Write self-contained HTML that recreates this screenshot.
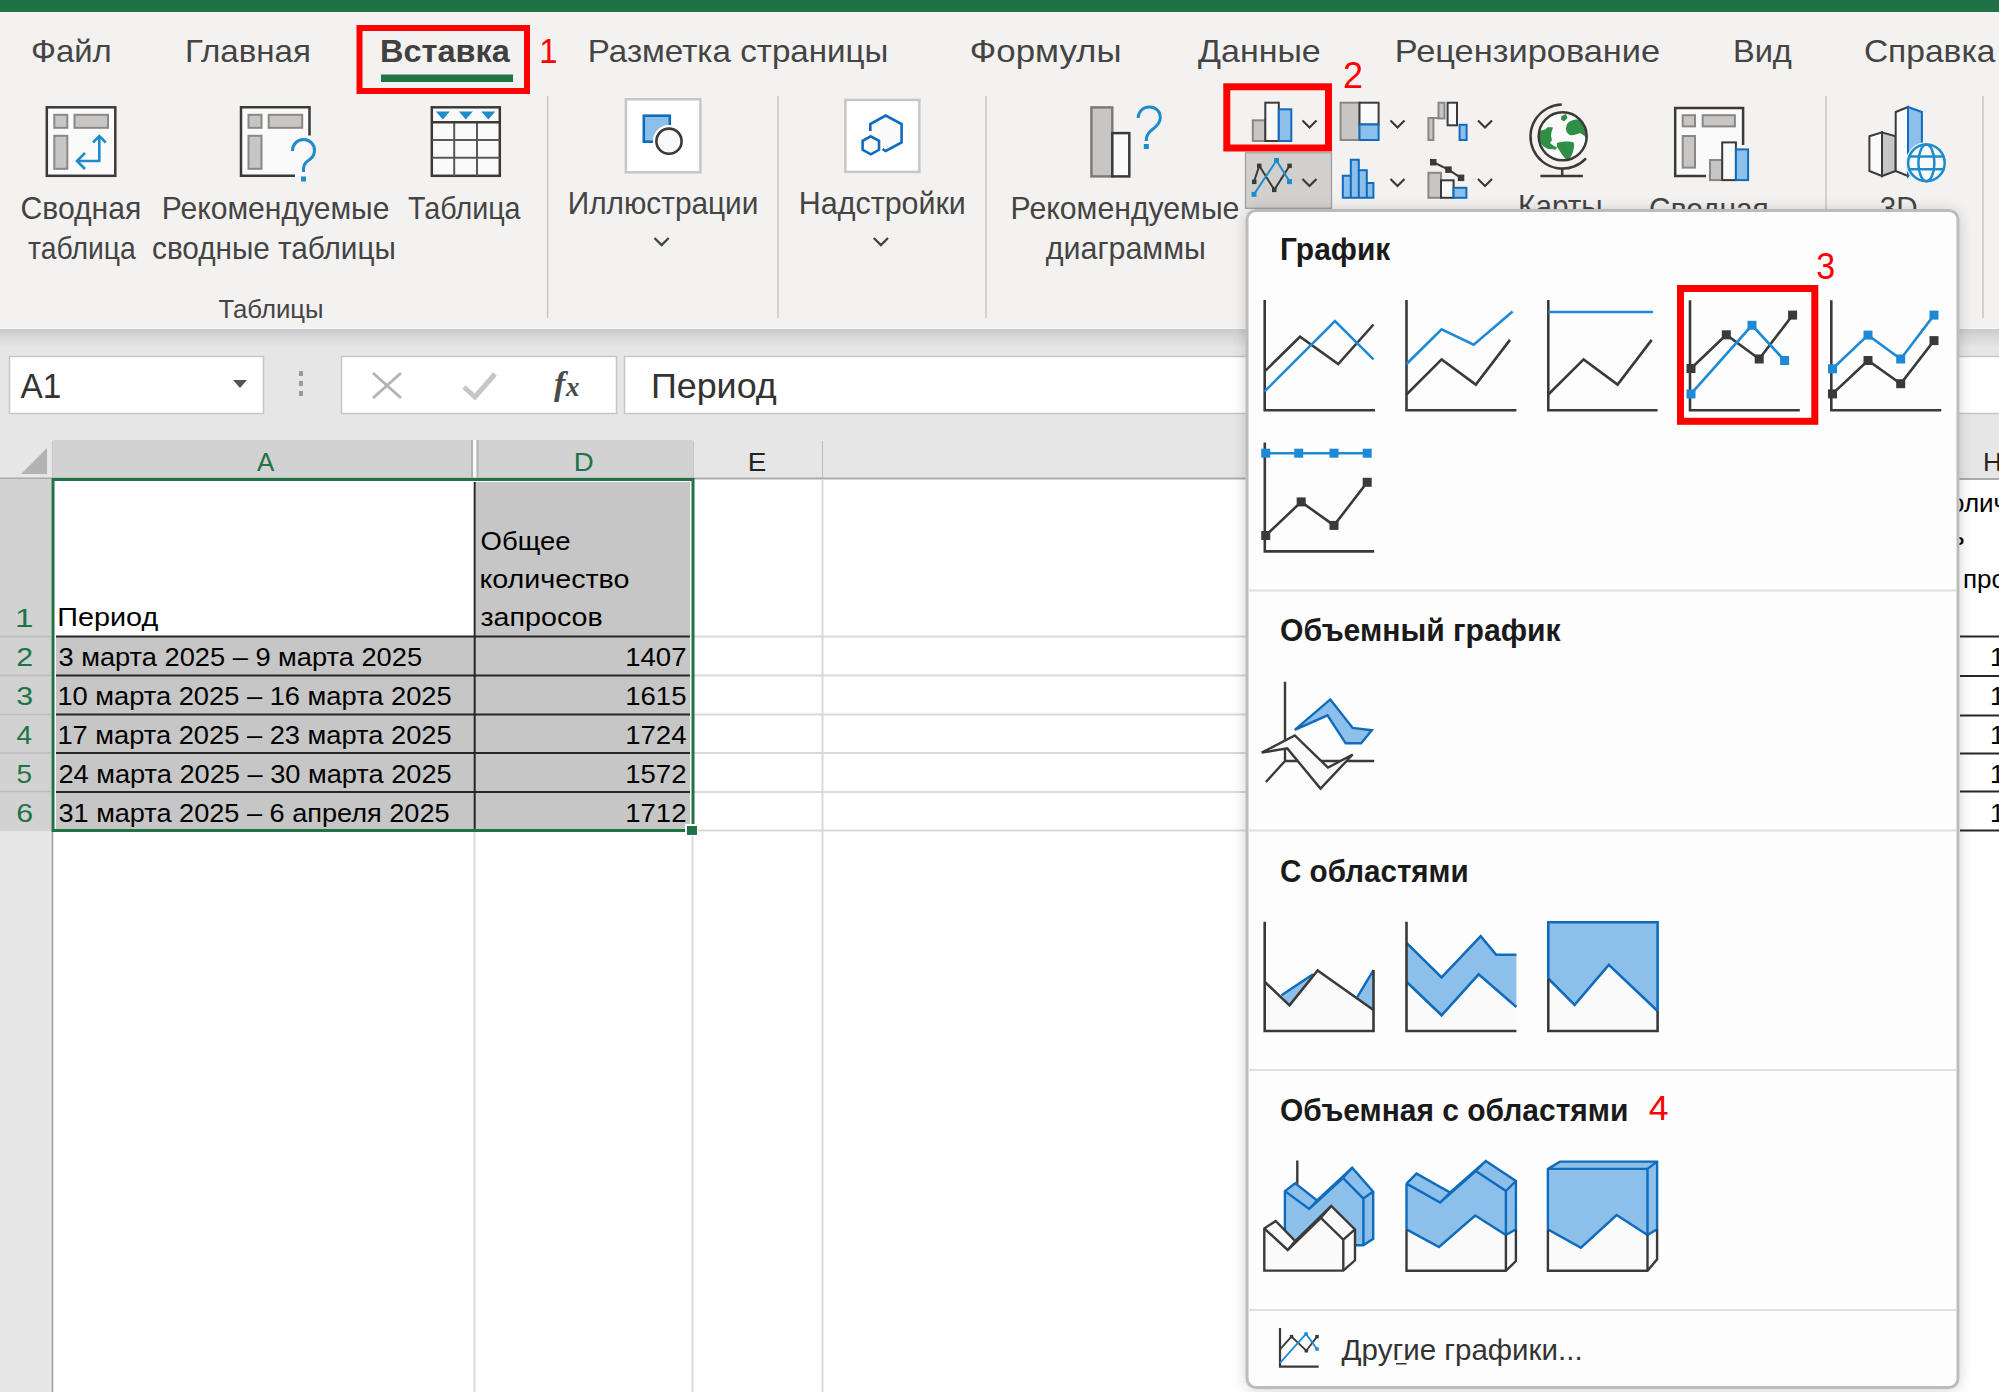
<!DOCTYPE html>
<html><head><meta charset="utf-8">
<style>
html,body{margin:0;padding:0;width:1999px;height:1392px;overflow:hidden;background:#fff}
svg{position:absolute;left:0;top:0;display:block}
text{font-family:"Liberation Sans",sans-serif;white-space:pre}
</style></head>
<body>
<svg width="1999" height="1392" viewBox="0 0 1999 1392">
<defs>
<linearGradient id="shd" x1="0" y1="0" x2="0" y2="1"><stop offset="0" stop-color="#c9c9c9"/><stop offset="0.35" stop-color="#d6d6d6"/><stop offset="1" stop-color="#e6e6e6"/></linearGradient>
<filter id="dshadow" x="-10%" y="-10%" width="120%" height="120%"><feGaussianBlur in="SourceAlpha" stdDeviation="7"/><feOffset dx="0" dy="1"/><feComponentTransfer><feFuncA type="linear" slope="0.18"/></feComponentTransfer><feMerge><feMergeNode/><feMergeNode in="SourceGraphic"/></feMerge></filter>
</defs>
<!-- ===== SHEET ===== -->
<rect x="0" y="0" width="1999" height="1392" fill="#ffffff"/>
<!-- header row -->
<rect x="0" y="440" width="1999" height="39" fill="#e6e6e6"/>
<rect x="53" y="440" width="420" height="38" fill="#d2d2d2"/>
<rect x="476" y="440" width="217" height="38" fill="#d2d2d2"/>
<rect x="472" y="440" width="5" height="38" fill="#fafafa"/>
<!-- select all triangle -->
<polygon points="21,474 47,474 47,448" fill="#b3b3b3"/>
<!-- header separators -->
<line x1="52.5" y1="441" x2="52.5" y2="478" stroke="#c8c8c8" stroke-width="1"/>
<line x1="472" y1="440" x2="472" y2="478" stroke="#b4b4b4" stroke-width="2"/>
<line x1="477.5" y1="440" x2="477.5" y2="478" stroke="#b4b4b4" stroke-width="2"/>
<line x1="693.5" y1="441" x2="693.5" y2="478" stroke="#c6c6c6" stroke-width="1"/>
<line x1="822.5" y1="441" x2="822.5" y2="478" stroke="#bcbcbc" stroke-width="1"/>
<line x1="0" y1="478.5" x2="1999" y2="478.5" stroke="#ababab" stroke-width="2"/>
<!-- row headers -->
<rect x="0" y="479" width="52" height="913" fill="#e6e6e6"/>
<rect x="0" y="479" width="51" height="352" fill="#d2d2d2"/>
<g stroke="#bcbcbc" stroke-width="1.5">
<line x1="0" y1="636.5" x2="51" y2="636.5"/>
<line x1="0" y1="675.5" x2="51" y2="675.5"/>
<line x1="0" y1="714.5" x2="51" y2="714.5"/>
<line x1="0" y1="753" x2="51" y2="753"/>
<line x1="0" y1="791.5" x2="51" y2="791.5"/>
</g>
<line x1="52.5" y1="830" x2="52.5" y2="1392" stroke="#9e9e9e" stroke-width="1.5"/>
<!-- gridlines right of D -->
<g stroke="#d9d9d9" stroke-width="2">
<line x1="693" y1="636.5" x2="1250" y2="636.5"/>
<line x1="693" y1="675.5" x2="1250" y2="675.5"/>
<line x1="693" y1="714.5" x2="1250" y2="714.5"/>
<line x1="693" y1="753" x2="1250" y2="753"/>
<line x1="693" y1="792" x2="1250" y2="792"/>
<line x1="693" y1="830.5" x2="1250" y2="830.5"/>
<line x1="822.5" y1="479" x2="822.5" y2="1392"/>
<line x1="474.5" y1="832" x2="474.5" y2="1392"/>
<line x1="692.5" y1="832" x2="692.5" y2="1392"/>
</g>
<!-- cells -->
<rect x="476" y="482" width="214" height="154" fill="#c6c6c6"/>
<rect x="56" y="637" width="634" height="192" fill="#c6c6c6"/>
<g stroke="#262626" stroke-width="2">
<line x1="56" y1="636.5" x2="690" y2="636.5"/>
<line x1="56" y1="675.5" x2="690" y2="675.5"/>
<line x1="56" y1="714.5" x2="690" y2="714.5"/>
<line x1="56" y1="753" x2="690" y2="753"/>
<line x1="56" y1="792" x2="690" y2="792"/>
<line x1="474.7" y1="482" x2="474.7" y2="829"/>
</g>
<!-- selection border -->
<rect x="53" y="479.5" width="640" height="351" fill="none" stroke="#217346" stroke-width="3"/>
<rect x="685" y="824" width="13" height="12" fill="#ffffff"/>
<rect x="687" y="826" width="10" height="9" fill="#217346"/>
<!-- right side partial table (x>1958) -->
<rect x="1958" y="356" width="41" height="58" fill="#ffffff"/>
<rect x="1958" y="415" width="41" height="64" fill="#e6e6e6"/>
<line x1="1958" y1="479" x2="1999" y2="479" stroke="#ababab" stroke-width="2"/>
<g stroke="#262626" stroke-width="2">
<line x1="1960" y1="636.5" x2="1999" y2="636.5"/>
<line x1="1960" y1="676" x2="1999" y2="676"/>
<line x1="1960" y1="715.5" x2="1999" y2="715.5"/>
<line x1="1960" y1="753.5" x2="1999" y2="753.5"/>
<line x1="1960" y1="791.5" x2="1999" y2="791.5"/>
<line x1="1960" y1="830.5" x2="1999" y2="830.5"/>
</g>
<text x="1983" y="471" font-size="26" fill="#222">H</text>
<text x="1950" y="512" font-size="26" fill="#000">оличество</text>
<text x="1951" y="545" font-size="26" fill="#000">ь</text>
<text x="1963" y="588" font-size="26" fill="#000">просов</text>
<g font-size="26" fill="#000">
<text x="1990" y="666">1</text><text x="1990" y="705">1</text><text x="1990" y="744">1</text><text x="1990" y="783">1</text><text x="1990" y="822">1</text>
</g>

<!-- ===== FORMULA BAR ===== -->
<rect x="0" y="328" width="1999" height="112" fill="#e6e6e6"/>
<rect x="0" y="329" width="1999" height="19" fill="url(#shd)"/>
<rect x="9.5" y="356.5" width="254" height="57" fill="#ffffff" stroke="#c6c6c6" stroke-width="1.5"/>
<polygon points="233,380 247,380 240,388" fill="#555"/>
<g fill="#9a9a9a"><rect x="299" y="371" width="4" height="5"/><rect x="299" y="381" width="4" height="5"/><rect x="299" y="391" width="4" height="5"/></g>
<rect x="341.5" y="356.5" width="275" height="57" fill="#ffffff" stroke="#c6c6c6" stroke-width="1.5"/>
<g stroke="#b4b4b4" stroke-width="3" fill="none">
<line x1="373" y1="373" x2="401" y2="398"/><line x1="401" y1="373" x2="373" y2="398"/>
</g>
<polyline points="464,387 475,397 495,374" stroke="#c6c6c6" stroke-width="5" fill="none"/>
<text x="554" y="395" style="font-family:'Liberation Serif'" font-style="italic" font-weight="bold" font-size="34" fill="#4a4a4a">f</text>
<text x="566" y="396" style="font-family:'Liberation Serif'" font-style="italic" font-weight="bold" font-size="27" fill="#4a4a4a">x</text>
<rect x="624.5" y="356.5" width="1400" height="57" fill="#ffffff" stroke="#c6c6c6" stroke-width="1.5"/>

<!-- ===== RIBBON ===== -->
<rect x="0" y="0" width="1999" height="12" fill="#1f7145"/>
<rect x="0" y="12" width="1999" height="317" fill="#f3f2f1"/>
<line x1="0" y1="328.5" x2="1999" y2="328.5" stroke="#f7f6f5" stroke-width="1"/>
<!-- red box 1 & underline -->
<rect x="359.5" y="28" width="167.5" height="63" fill="none" stroke="#ff0000" stroke-width="6"/>
<rect x="381" y="74.5" width="132" height="7.5" fill="#217346"/>
<!-- separators -->
<g stroke="#c8c6c4" stroke-width="1.5">
<line x1="547.6" y1="96" x2="547.6" y2="318"/>
<line x1="778" y1="96" x2="778" y2="318"/>
<line x1="986" y1="96" x2="986" y2="318"/>
<line x1="1826" y1="96" x2="1826" y2="318"/>
<line x1="1983" y1="96" x2="1983" y2="318"/>
</g>
<!-- pivot table icon -->
<g stroke-linejoin="miter">
<rect x="46.8" y="107.3" width="68.5" height="68.5" fill="#fafafa" stroke="#3b3a39" stroke-width="2.5"/>
<g fill="#c8c6c4" stroke="#8a8886" stroke-width="2">
<rect x="54.3" y="114.8" width="13" height="13"/><rect x="74.5" y="114.8" width="33.5" height="13"/><rect x="54.3" y="135.8" width="13" height="33"/>
</g>
<g fill="none" stroke="#1e8bcd" stroke-width="2.6">
<path d="M77 161 H99.3 V136"/><path d="M93 142.5 L99.3 136 L105.8 142.5"/><path d="M85 153 L77 161 L85 169"/>
</g>
</g>
<!-- recommended pivot icon -->
<rect x="241" y="108" width="68.5" height="68" fill="#fafafa"/>
<path d="M295 175.8 H241 V107.3 H309.5 V135.5" fill="none" stroke="#3b3a39" stroke-width="2.5"/>
<g fill="#c8c6c4" stroke="#8a8886" stroke-width="2">
<rect x="248.5" y="114.8" width="13" height="13"/><rect x="268.7" y="114.8" width="33.5" height="13"/><rect x="248.5" y="135.8" width="13" height="33"/>
</g>
<path d="M292.5 151 C292.5 144 297.5 139.5 303.5 139.5 C309.8 139.5 314.5 144 314.5 150.5 C314.5 156.5 310.5 159 307 161.5 C304.3 163.5 303.5 165.5 303.5 170 V172" fill="none" stroke="#1e8bcd" stroke-width="3"/>
<rect x="301" y="176.5" width="5" height="5" fill="#1e8bcd"/>
<!-- table icon -->
<rect x="431.8" y="107.3" width="68" height="68.5" fill="#fafafa" stroke="#3b3a39" stroke-width="2.5"/>
<g stroke="#5a5958" stroke-width="2"><line x1="432" y1="140" x2="500" y2="140"/><line x1="432" y1="157.7" x2="500" y2="157.7"/><line x1="454.2" y1="122" x2="454.2" y2="176"/><line x1="477" y1="122" x2="477" y2="176"/></g>
<line x1="431" y1="122.3" x2="501" y2="122.3" stroke="#3b3a39" stroke-width="2.5"/>
<g fill="#1e8bcd"><polygon points="435.8,111.5 449.8,111.5 442.8,119.5"/><polygon points="458.8,111.5 472.8,111.5 465.8,119.5"/><polygon points="481.3,111.5 495.3,111.5 488.3,119.5"/></g>
<!-- illustrations -->
<rect x="625.9" y="99.3" width="74.5" height="73" fill="#ffffff" stroke="#c8c6c4" stroke-width="2.5"/>
<rect x="643.8" y="115.7" width="26" height="26" fill="#8cc0ea" stroke="#0f6cbd" stroke-width="2.6"/>
<circle cx="669" cy="141.2" r="12.6" fill="#fafafa" stroke="#ffffff" stroke-width="7"/>
<circle cx="669" cy="141.2" r="12.6" fill="#fafafa" stroke="#3b3a39" stroke-width="2.6"/>
<path d="M654.5 238 L661.6 245 L668.7 238" fill="none" stroke="#444" stroke-width="2.4"/>
<!-- addins -->
<rect x="845.4" y="99.9" width="74" height="72" fill="#ffffff" stroke="#c8c6c4" stroke-width="2.5"/>
<path d="M870.3 131 V124 L885.7 115.5 L901.6 124 V142.5 L885.7 151 L882.5 149.2" fill="#fafafa" stroke="#0f6cbd" stroke-width="2.6"/>
<polygon points="870.8,136.3 879,140.8 879,149.8 870.8,154.3 862.6,149.8 862.6,140.8" fill="#fafafa" stroke="#0f6cbd" stroke-width="2.6"/>
<path d="M873.8 238 L880.9 245 L888 238" fill="none" stroke="#444" stroke-width="2.4"/>
<!-- recommended charts -->
<rect x="1091.4" y="107.4" width="20.9" height="69" fill="#c8c6c4" stroke="#7a7876" stroke-width="2.4"/>
<rect x="1112.3" y="133.1" width="17" height="43.3" fill="#fafafa" stroke="#3b3a39" stroke-width="2.5"/>
<path d="M1138 118 C1138.8 111 1143.3 107 1149.5 107 C1156 107 1160.3 111.5 1160.3 117.5 C1160.3 123 1157 126 1153 129 C1149 132 1146.3 135 1146.3 139.5 V141" fill="none" stroke="#1e8bcd" stroke-width="3"/>
<rect x="1143.8" y="144" width="5" height="5" fill="#1e8bcd"/>
<!-- charts group -->
<rect x="1226.8" y="86.8" width="101.7" height="61.2" fill="none" stroke="#ff0000" stroke-width="7"/>
<g stroke-width="2">
<rect x="1252.8" y="120.3" width="12.5" height="20.7" fill="#c8c6c4" stroke="#8a8886"/>
<rect x="1265.3" y="102.7" width="13.5" height="38.3" fill="#fafafa" stroke="#3b3a39"/>
<rect x="1278.8" y="109.3" width="12.5" height="31.7" fill="#8cc0ea" stroke="#0f6cbd"/>
</g>
<rect x="1245.5" y="152.8" width="86" height="55.5" fill="#d2d0ce" stroke="#9e9c9a" stroke-width="1.2"/>
<polyline points="1254,181.6 1259.3,165.8 1274.3,189.8 1289.6,165.8" fill="none" stroke="#3b3a39" stroke-width="2"/>
<polyline points="1254,194.3 1276.5,160.5 1289.6,181.6" fill="none" stroke="#1e8bcd" stroke-width="2"/>
<g fill="#3b3a39"><rect x="1252" y="179.6" width="4.5" height="4.5"/><rect x="1257" y="163.6" width="4.5" height="4.5"/><rect x="1272" y="187.6" width="4.5" height="4.5"/><rect x="1287.3" y="163.6" width="4.5" height="4.5"/></g>
<g fill="#1e8bcd"><rect x="1251.5" y="191.8" width="5" height="5"/><rect x="1274" y="158" width="5" height="5"/><rect x="1287" y="179.1" width="5" height="5"/></g>
<g fill="none" stroke="#3b3a39" stroke-width="2.2">
<path d="M1302.5 120.5 L1309.5 127.5 L1316.5 120.5"/><path d="M1302.5 179 L1309.5 186 L1316.5 179"/>
<path d="M1390.5 120.5 L1397.5 127.5 L1404.5 120.5"/><path d="M1390.5 179 L1397.5 186 L1404.5 179"/>
<path d="M1478 120.5 L1485 127.5 L1492 120.5"/><path d="M1478 179 L1485 186 L1492 179"/>
</g>
<g stroke-width="2">
<rect x="1340.6" y="102.7" width="18.9" height="37.3" fill="#c8c6c4" stroke="#8a8886"/>
<rect x="1359.5" y="102.7" width="19.1" height="21.8" fill="#fafafa" stroke="#3b3a39"/>
<rect x="1359.5" y="124.5" width="19.1" height="15.5" fill="#8cc0ea" stroke="#0f6cbd"/>
<!-- waterfall -->
<rect x="1428.4" y="118" width="5" height="22" fill="#c8c6c4" stroke="#8a8886"/>
<path d="M1428.4 118 H1438" fill="none" stroke="#8a8886"/>
<rect x="1438.5" y="102.7" width="6" height="15.8" fill="#c8c6c4" stroke="#8a8886"/>
<rect x="1447.6" y="102.7" width="9.4" height="22.6" fill="#fafafa" stroke="#3b3a39"/>
<rect x="1459.6" y="124.8" width="7" height="15.2" fill="#8cc0ea" stroke="#0f6cbd"/>
<!-- histogram -->
<path d="M1342.8 197.8 V175.8 H1350.8 V159.7 H1358.8 V170.3 H1366.8 V182.9 H1373.4 V197.8 Z" fill="#8cc0ea" stroke="#0f6cbd"/>
<path d="M1350.8 175.8 V197.8 M1358.8 170.3 V197.8 M1366.8 182.9 V197.8" fill="none" stroke="#0f6cbd"/>
<!-- combo -->
<rect x="1428.4" y="172.8" width="12.6" height="25" fill="#c8c6c4" stroke="#8a8886"/>
<rect x="1441" y="180.3" width="12.6" height="17.5" fill="#fafafa" stroke="#3b3a39"/>
<rect x="1453.6" y="187.8" width="12.8" height="10" fill="#8cc0ea" stroke="#0f6cbd"/>
</g>
<polyline points="1433,162 1448.4,169.6 1461,177.8" fill="none" stroke="#3b3a39" stroke-width="2"/>
<g fill="#3b3a39"><rect x="1430" y="159" width="6.5" height="6.5"/><rect x="1445.2" y="166.4" width="6.5" height="6.5"/><rect x="1457.8" y="174.6" width="6.5" height="6.5"/></g>
<!-- globe -->
<clipPath id="gclip"><circle cx="1562.7" cy="136.3" r="23.5"/></clipPath>
<circle cx="1562.7" cy="136.3" r="24" fill="#fafafa"/>
<g fill="#2f8f46" clip-path="url(#gclip)">
<path d="M1539 131 L1545 129.5 L1548 127 L1553 127.5 L1551.5 132 L1551 136 L1552 140 L1550 143 L1554 146 L1557 147.5 L1556 149.5 L1548 149 L1543 146 L1538 140 Z"/>
<path d="M1566.5 126 C1567.5 121 1573 119.5 1578 119.5 C1583 120 1586 124 1588 130 L1588 140 L1584 135.5 L1580 133 C1576 134.5 1572 136.5 1569 134.5 C1566 132.5 1565 129 1566.5 126 Z"/>
<path d="M1561.5 116 L1566 114 L1567.5 118 L1564 121.5 L1561 119.5 Z"/>
<path d="M1557 143 C1562 141.5 1569 141 1573.5 142.5 C1575 145 1573.5 149 1573 152 C1571.5 156 1570 158.5 1567 160 C1563 157 1560 151 1557 147 Z"/>
</g>
<circle cx="1562.7" cy="136.3" r="24" fill="none" stroke="#3b3a39" stroke-width="2.5"/>
<path d="M1561.8 104.6 A32 32 0 1 0 1586 158.3" fill="none" stroke="#3b3a39" stroke-width="2.5"/>
<line x1="1562.2" y1="168" x2="1562.2" y2="176" stroke="#3b3a39" stroke-width="2.5"/>
<line x1="1540.4" y1="176" x2="1582.9" y2="176" stroke="#3b3a39" stroke-width="2.5"/>
<!-- pivot chart -->
<path d="M1675.2 108 H1743.1 V145 L1706 176 H1675.2 Z" fill="#fafafa"/>
<path d="M1706 176 H1675.2 V108 H1743.1 V145" fill="none" stroke="#3b3a39" stroke-width="2.5"/>
<g fill="#c8c6c4" stroke="#8a8886" stroke-width="2">
<rect x="1682.7" y="115.2" width="12.3" height="11.2"/><rect x="1702.7" y="115.2" width="32.2" height="11.2"/><rect x="1682.7" y="136" width="12.3" height="31.6"/>
<rect x="1710" y="160" width="12.2" height="20.1"/>
</g>
<rect x="1722.2" y="142.4" width="13.7" height="37.7" fill="#fafafa" stroke="#3b3a39" stroke-width="2"/>
<rect x="1735.9" y="149.4" width="12.2" height="30.7" fill="#8cc0ea" stroke="#0f6cbd" stroke-width="2"/>
<!-- 3D map -->
<polygon points="1869.4,136.2 1882,132.4 1882,176 1869.4,171" fill="#fafafa" stroke="#3b3a39" stroke-width="2"/>
<polygon points="1882,132.4 1895.7,136.2 1895.7,171 1882,176" fill="#c8c6c4" stroke="#3b3a39" stroke-width="2"/>
<polygon points="1895.7,112 1908,107 1908,176 1895.7,171" fill="#fafafa" stroke="#3b3a39" stroke-width="2"/>
<polygon points="1908,107 1921.9,112 1921.9,160 1908,176" fill="#8cc0ea" stroke="#0f6cbd" stroke-width="2"/>
<circle cx="1926.4" cy="162.9" r="18.3" fill="#fafafa" stroke="#f3f2f1" stroke-width="5"/>
<g fill="none" stroke="#1e8bcd" stroke-width="2.5">
<circle cx="1926.4" cy="162.9" r="18.3"/>
<ellipse cx="1926.4" cy="162.9" rx="8" ry="18.3"/>
<line x1="1908.5" y1="156.5" x2="1944.3" y2="156.5"/><line x1="1908.5" y1="169.3" x2="1944.3" y2="169.3"/>
</g>

<g>
<text x="30.95" y="62" font-size="32" fill="#444444" textLength="80.77" lengthAdjust="spacingAndGlyphs">Файл</text>
<text x="184.90" y="62" font-size="32" fill="#444444" textLength="125.96" lengthAdjust="spacingAndGlyphs">Главная</text>
<text x="379.97" y="62" font-size="32" font-weight="bold" fill="#404040" textLength="129.89" lengthAdjust="spacingAndGlyphs">Вставка</text>
<text x="539.20" y="62.5" font-size="35" fill="#ff0000" textLength="18.17" lengthAdjust="spacingAndGlyphs">1</text>
<text x="587.89" y="62" font-size="32" fill="#444444" textLength="300.48" lengthAdjust="spacingAndGlyphs">Разметка страницы</text>
<text x="969.82" y="62" font-size="32" fill="#444444" textLength="151.63" lengthAdjust="spacingAndGlyphs">Формулы</text>
<text x="1198.00" y="62" font-size="32" fill="#444444" textLength="122.71" lengthAdjust="spacingAndGlyphs">Данные</text>
<text x="1394.78" y="62" font-size="32" fill="#444444" textLength="265.40" lengthAdjust="spacingAndGlyphs">Рецензирование</text>
<text x="1732.95" y="62" font-size="32" fill="#444444" textLength="58.94" lengthAdjust="spacingAndGlyphs">Вид</text>
<text x="1863.90" y="62" font-size="32" fill="#444444" textLength="131.61" lengthAdjust="spacingAndGlyphs">Справка</text>
<text x="1343.00" y="87.8" font-size="36" fill="#ff0000" textLength="20.03" lengthAdjust="spacingAndGlyphs">2</text>
<text x="20.49" y="219" font-size="31.5" fill="#444444" textLength="120.72" lengthAdjust="spacingAndGlyphs">Сводная</text>
<text x="28.00" y="259" font-size="31.5" fill="#444444" textLength="107.79" lengthAdjust="spacingAndGlyphs">таблица</text>
<text x="161.69" y="219" font-size="31.5" fill="#444444" textLength="227.73" lengthAdjust="spacingAndGlyphs">Рекомендуемые</text>
<text x="152.06" y="259" font-size="31.5" fill="#444444" textLength="243.79" lengthAdjust="spacingAndGlyphs">сводные таблицы</text>
<text x="408.09" y="219" font-size="31.5" fill="#444444" textLength="112.47" lengthAdjust="spacingAndGlyphs">Таблица</text>
<text x="218.40" y="318" font-size="26" fill="#444444" textLength="105.16" lengthAdjust="spacingAndGlyphs">Таблицы</text>
<text x="567.81" y="214" font-size="31.5" fill="#444444" textLength="190.60" lengthAdjust="spacingAndGlyphs">Иллюстрации</text>
<text x="798.87" y="214" font-size="31.5" fill="#444444" textLength="166.91" lengthAdjust="spacingAndGlyphs">Надстройки</text>
<text x="1010.58" y="219.3" font-size="31.5" fill="#444444" textLength="228.84" lengthAdjust="spacingAndGlyphs">Рекомендуемые</text>
<text x="1045.80" y="259" font-size="31.5" fill="#444444" textLength="160.11" lengthAdjust="spacingAndGlyphs">диаграммы</text>
<text x="1518.12" y="217" font-size="31.5" fill="#444444" textLength="84.55" lengthAdjust="spacingAndGlyphs">Карты</text>
<text x="1649.10" y="219.5" font-size="31.5" fill="#444444" textLength="119.69" lengthAdjust="spacingAndGlyphs">Сводная</text>
<text x="1879.76" y="219" font-size="31.5" fill="#444444" textLength="37.84" lengthAdjust="spacingAndGlyphs">3D</text>
<text x="20.40" y="397.8" font-size="35" fill="#333" textLength="40.83" lengthAdjust="spacingAndGlyphs">A1</text>
<text x="650.92" y="397.8" font-size="35" fill="#333" textLength="125.86" lengthAdjust="spacingAndGlyphs">Период</text>
<text x="257.00" y="471" font-size="26" fill="#217346" textLength="17.34" lengthAdjust="spacingAndGlyphs">A</text>
<text x="573.88" y="471" font-size="26" fill="#217346" textLength="19.96" lengthAdjust="spacingAndGlyphs">D</text>
<text x="747.86" y="471" font-size="26" fill="#222" textLength="18.58" lengthAdjust="spacingAndGlyphs">E</text>
<text x="14.95" y="627" font-size="26" fill="#217346" textLength="18.41" lengthAdjust="spacingAndGlyphs">1</text>
<text x="16.33" y="666" font-size="26" fill="#217346" textLength="16.88" lengthAdjust="spacingAndGlyphs">2</text>
<text x="16.33" y="705" font-size="26" fill="#217346" textLength="16.88" lengthAdjust="spacingAndGlyphs">3</text>
<text x="16.42" y="744" font-size="26" fill="#217346" textLength="15.58" lengthAdjust="spacingAndGlyphs">4</text>
<text x="16.42" y="783" font-size="26" fill="#217346" textLength="15.58" lengthAdjust="spacingAndGlyphs">5</text>
<text x="16.33" y="822" font-size="26" fill="#217346" textLength="16.88" lengthAdjust="spacingAndGlyphs">6</text>
<text x="57.29" y="626.4" font-size="26" fill="#000" textLength="100.94" lengthAdjust="spacingAndGlyphs">Период</text>
<text x="480.54" y="549.6" font-size="26" fill="#000" textLength="89.96" lengthAdjust="spacingAndGlyphs">Общее</text>
<text x="479.40" y="587.6" font-size="26" fill="#000" textLength="150.08" lengthAdjust="spacingAndGlyphs">количество</text>
<text x="480.50" y="626.4" font-size="26" fill="#000" textLength="122.15" lengthAdjust="spacingAndGlyphs">запросов</text>
<text x="58.45" y="666" font-size="26" fill="#000" textLength="363.61" lengthAdjust="spacingAndGlyphs">3 марта 2025 – 9 марта 2025</text>
<text x="625.28" y="666" font-size="26" fill="#000" textLength="61.21" lengthAdjust="spacingAndGlyphs">1407</text>
<text x="57.40" y="705" font-size="26" fill="#000" textLength="394.26" lengthAdjust="spacingAndGlyphs">10 марта 2025 – 16 марта 2025</text>
<text x="625.28" y="705" font-size="26" fill="#000" textLength="61.21" lengthAdjust="spacingAndGlyphs">1615</text>
<text x="57.40" y="744" font-size="26" fill="#000" textLength="394.26" lengthAdjust="spacingAndGlyphs">17 марта 2025 – 23 марта 2025</text>
<text x="625.28" y="744" font-size="26" fill="#000" textLength="61.21" lengthAdjust="spacingAndGlyphs">1724</text>
<text x="58.45" y="783" font-size="26" fill="#000" textLength="393.21" lengthAdjust="spacingAndGlyphs">24 марта 2025 – 30 марта 2025</text>
<text x="625.28" y="783" font-size="26" fill="#000" textLength="61.21" lengthAdjust="spacingAndGlyphs">1572</text>
<text x="58.46" y="822" font-size="26" fill="#000" textLength="391.10" lengthAdjust="spacingAndGlyphs">31 марта 2025 – 6 апреля 2025</text>
<text x="625.28" y="822" font-size="26" fill="#000" textLength="61.21" lengthAdjust="spacingAndGlyphs">1712</text>
</g>
<!-- ===== DROPDOWN ===== -->
<g filter="url(#dshadow)">
<rect x="1247" y="210.5" width="711" height="1177" rx="9" ry="9" fill="#fdfdfd" stroke="#bebcba" stroke-width="3"/>
</g>
<g stroke="#e1dfdd" stroke-width="2">
<line x1="1248.5" y1="590.5" x2="1957" y2="590.5"/>
<line x1="1248.5" y1="830.5" x2="1957" y2="830.5"/>
<line x1="1248.5" y1="1070" x2="1957" y2="1070"/>
<line x1="1248.5" y1="1310" x2="1957" y2="1310"/>
</g>
<g fill="none" stroke-linejoin="miter" stroke-linecap="butt">
<!-- chart 1 -->
<path d="M1264.7 300 V410.3 H1375" stroke="#3a3a3a" stroke-width="2.6"/>
<polyline points="1264.7,371.4 1300,336.7 1338.2,364 1373.5,324.5" stroke="#3a3a3a" stroke-width="2.6"/>
<polyline points="1264.7,391.3 1335,321 1373.5,359.4" stroke="#1e8ad6" stroke-width="2.6"/>
<!-- chart 2 -->
<path d="M1406.5 300 V410.3 H1516.4" stroke="#3a3a3a" stroke-width="2.6"/>
<polyline points="1406.5,394.5 1441.6,359.4 1475.8,384.6 1510,339.9" stroke="#3a3a3a" stroke-width="2.6"/>
<polyline points="1406.5,364 1441.6,329.4 1473.7,344.7 1512.6,311.5" stroke="#1e8ad6" stroke-width="2.6"/>
<!-- chart 3 -->
<path d="M1548.3 300 V410.3 H1657.6" stroke="#3a3a3a" stroke-width="2.6"/>
<path d="M1548.3 312 H1653" stroke="#1e8ad6" stroke-width="2.6"/>
<polyline points="1548.3,394.5 1583.6,359.4 1617.6,384.6 1651.7,339.9" stroke="#3a3a3a" stroke-width="2.6"/>
<!-- chart 4 -->
<path d="M1690 300.3 V410.3 H1799.8" stroke="#3a3a3a" stroke-width="2.6"/>
<polyline points="1691,368.5 1726.3,334.8 1759.2,359 1792.6,315.1" stroke="#3a3a3a" stroke-width="2.6"/>
<polyline points="1691,393.9 1752,325.3 1784.6,360.5" stroke="#1e8ad6" stroke-width="2.6"/>
<!-- chart 5 -->
<path d="M1831.3 300.3 V410.3 H1941.3" stroke="#3a3a3a" stroke-width="2.6"/>
<polyline points="1832.5,393.9 1868,360.5 1900.7,383.7 1934,340.6" stroke="#3a3a3a" stroke-width="2.6"/>
<polyline points="1832.5,368.8 1868,335.1 1900.7,359 1934,315.1" stroke="#1e8ad6" stroke-width="2.6"/>
<!-- chart 6 -->
<path d="M1264.8 442.6 V551.4 H1374.2" stroke="#3a3a3a" stroke-width="2.6"/>
<path d="M1265.7 453.2 H1367.2" stroke="#1e8ad6" stroke-width="2.6"/>
<polyline points="1265.7,535.5 1301.2,501.9 1334,525.4 1367.2,482.3" stroke="#3a3a3a" stroke-width="2.6"/>
</g>
<!-- markers -->
<g fill="#3a3a3a">
<rect x="1686.5" y="364" width="9" height="9"/><rect x="1721.8" y="330.3" width="9" height="9"/><rect x="1754.7" y="354.5" width="9" height="9"/><rect x="1788.1" y="310.6" width="9" height="9"/>
<rect x="1828" y="389.4" width="9" height="9"/><rect x="1863.5" y="356" width="9" height="9"/><rect x="1896.2" y="379.2" width="9" height="9"/><rect x="1929.5" y="336.1" width="9" height="9"/>
<rect x="1261.2" y="531" width="9" height="9"/><rect x="1296.7" y="497.4" width="9" height="9"/><rect x="1329.5" y="520.9" width="9" height="9"/><rect x="1362.7" y="477.8" width="9" height="9"/>
</g>
<g fill="#1e8ad6">
<rect x="1686.5" y="389.4" width="9" height="9"/><rect x="1747.5" y="320.8" width="9" height="9"/><rect x="1780.1" y="356" width="9" height="9"/>
<rect x="1828" y="364.3" width="9" height="9"/><rect x="1863.5" y="330.6" width="9" height="9"/><rect x="1896.2" y="354.5" width="9" height="9"/><rect x="1929.5" y="310.6" width="9" height="9"/>
<rect x="1261.2" y="448.7" width="9" height="9"/><rect x="1294.2" y="448.7" width="9" height="9"/><rect x="1329.5" y="448.7" width="9" height="9"/><rect x="1362.7" y="448.7" width="9" height="9"/>
</g>
<!-- red box 3 -->
<rect x="1680.5" y="288.5" width="134.3" height="132.8" fill="none" stroke="#ff0000" stroke-width="7"/>
<!-- 3D line -->
<g fill="none" stroke-linejoin="miter">
<path d="M1285 681.7 V761 H1374.2 M1285 761 L1265.9 782" stroke="#3a3a3a" stroke-width="2.4"/>
<polygon points="1294.8,729.8 1330.3,699.4 1352.7,727.9 1371.8,730.2 1361.1,743.3 1345.7,743.3 1327.5,715.3" fill="#8cc0ea" stroke="#0f6cbd" stroke-width="2.4"/>
<path d="M1261.7 752.6 L1294.8 735.4 L1328 767.6 L1352.7 754.5 L1320.5 788.6 L1287.3 748.4 Z" fill="#fafafa" stroke="#3a3a3a" stroke-width="2.4"/>
</g>
<!-- areas -->
<g stroke-linejoin="miter">
<!-- area 1 -->
<path d="M1264.7 981.7 L1289.5 1005.4 L1317.6 970.5 L1373.5 1010 V1031 H1264.7 Z" fill="#fafafa"/>
<polygon points="1281.5,995.3 1313,974.3 1289.5,1005.4" fill="#8cc0ea"/>
<polygon points="1357.1,997.4 1373.5,970.1 1373.5,1010" fill="#8cc0ea"/>
<path d="M1281.5 995.3 L1313 974.3 M1357.1 997.4 L1373.5 970.1" fill="none" stroke="#0f6cbd" stroke-width="2.4"/>
<path d="M1264.7 921.8 V1031 H1373.5 V970" fill="none" stroke="#3a3a3a" stroke-width="2.6"/>
<polyline points="1264.7,981.7 1289.5,1005.4 1317.6,970.5 1373.5,1010" fill="none" stroke="#3a3a3a" stroke-width="2.6"/>
<!-- area 2 -->
<path d="M1406.5 942.8 L1441.6 977.5 L1480.7 936.1 L1496.2 954.8 H1516.4 V1006.9 L1478.6 974.3 L1441.6 1015.3 L1406.5 981.7 Z" fill="#8cc0ea"/>
<path d="M1406.5 981.7 L1441.6 1015.3 L1478.6 974.3 L1516.4 1006.9 V1031 H1406.5 Z" fill="#fafafa"/>
<polyline points="1406.5,942.8 1441.6,977.5 1480.7,936.1 1496.2,954.8 1516.4,954.8" fill="none" stroke="#0f6cbd" stroke-width="2.6"/>
<polyline points="1406.5,981.7 1441.6,1015.3 1478.6,974.3 1516.4,1006.9" fill="none" stroke="#0f6cbd" stroke-width="2.6"/>
<path d="M1406.5 921.8 V1031 H1516.4" fill="none" stroke="#3a3a3a" stroke-width="2.6"/>
<!-- area 3 -->
<path d="M1548.3 922.2 H1657.6 V1011 L1608.8 964.9 L1574.6 1004.8 L1548.3 978.5 Z" fill="#8cc0ea"/>
<path d="M1548.3 978.5 L1574.6 1004.8 L1608.8 964.9 L1657.6 1011 V1031 H1548.3 Z" fill="#fafafa"/>
<path d="M1548.3 978.5 V922.2 H1657.6 V1011" fill="none" stroke="#0f6cbd" stroke-width="2.6"/>
<polyline points="1548.3,978.5 1574.6,1004.8 1608.8,964.9 1657.6,1011" fill="none" stroke="#0f6cbd" stroke-width="2.6"/>
<path d="M1548.3 978.5 V1031 H1657.6 V1011" fill="none" stroke="#3a3a3a" stroke-width="2.6"/>
</g>
<!-- 3D areas -->
<g stroke-linejoin="miter" stroke-width="2.4">
<!-- 3d area 1 back (blue) -->
<line x1="1297.3" y1="1160.5" x2="1297.3" y2="1184" stroke="#3a3a3a"/>
<path d="M1284.9 1191.1 L1295.2 1183.2 L1317.1 1200.5 L1352.2 1167.8 L1373.2 1191.6 V1238.8 L1363.4 1245.3 H1284.9 Z" fill="#8cc0ea" stroke="#0f6cbd"/>
<path d="M1284.9 1191.1 L1309.2 1208.9 L1342.9 1178 L1363.4 1198.6 V1245.3 M1342.9 1178 L1352.2 1167.8 M1309.2 1208.9 L1317.1 1200.5 M1363.4 1198.6 L1373.2 1191.6" fill="none" stroke="#0f6cbd"/>
<!-- 3d area 1 front (white) -->
<path d="M1264.3 1228.5 L1275.7 1221 L1295.2 1241 L1331.2 1206 L1355 1229.4 V1260.3 L1343.3 1270.6 H1264.3 Z" fill="#fafafa" stroke="#3a3a3a"/>
<path d="M1264.3 1228.5 L1287.7 1250 L1320.9 1217.8 L1343.3 1239.7 V1270.6 M1287.7 1250 L1295.2 1241 M1320.9 1217.8 L1331.2 1206 M1343.3 1239.7 L1355 1229.4" fill="none" stroke="#3a3a3a"/>
<!-- 3d area 2 -->
<path d="M1406.5 1183.6 L1416.5 1173.6 L1450.1 1192.5 L1485.8 1161 L1515.9 1181 V1261 L1505.9 1270.8 H1406.5 Z" fill="#8cc0ea"/>
<path d="M1406.5 1229.4 L1439 1247 L1475.2 1215.5 L1505.9 1235 L1515.9 1229.4 V1261 L1505.9 1270.8 H1406.5 Z" fill="#fafafa"/>
<path d="M1406.5 1183.6 L1416.5 1173.6 L1450.1 1192.5 L1485.8 1161 L1515.9 1181 V1229.4 L1505.9 1235 M1406.5 1183.6 L1440.1 1202.5 L1475.8 1171 L1505.9 1191 V1235 M1440.1 1202.5 L1450.1 1192.5 M1475.8 1171 L1485.8 1161 M1505.9 1191 L1515.9 1181 M1406.5 1229.4 L1439 1247 L1475.2 1215.5 L1505.9 1235 M1406.5 1183.6 V1229.4" fill="none" stroke="#0f6cbd"/>
<path d="M1406.5 1229.4 V1270.8 H1505.9 L1515.9 1261 V1229.4 M1505.9 1235 V1270.8" fill="none" stroke="#3a3a3a"/>
<!-- 3d area 3 -->
<path d="M1547.9 1168.9 L1559.9 1161.6 H1657.1 V1259.2 L1647.5 1270.8 H1547.9 Z" fill="#8cc0ea"/>
<path d="M1547.9 1229.4 L1580.9 1247.7 L1616.6 1215.1 L1647.5 1235 L1657.1 1229.4 V1259.2 L1647.5 1270.8 H1547.9 Z" fill="#fafafa"/>
<path d="M1547.9 1229.4 V1168.9 L1559.9 1161.6 H1657.1 V1229.4 L1647.5 1235 M1547.9 1168.9 H1647.5 V1235 M1647.5 1168.9 L1657.1 1161.6 M1547.9 1229.4 L1580.9 1247.7 L1616.6 1215.1 L1647.5 1235" fill="none" stroke="#0f6cbd"/>
<path d="M1547.9 1229.4 V1270.8 H1647.5 L1657.1 1259.2 V1229.4 M1647.5 1235 V1270.8" fill="none" stroke="#3a3a3a"/>
</g>
<!-- other charts icon -->
<g fill="none">
<path d="M1280 1328 V1366.7 H1318.7" stroke="#3a3a3a" stroke-width="2.2"/>
<polyline points="1280,1349.3 1291.5,1336.6 1306.3,1350.7 1317,1336.6" stroke="#3a3a3a" stroke-width="1.8"/>
<polyline points="1280,1362.9 1306,1334 1317,1349" stroke="#1e8ad6" stroke-width="1.8"/>
</g>
<g fill="#3a3a3a"><rect x="1289.8" y="1334.9" width="3.5" height="3.5"/><rect x="1304.6" y="1349" width="3.5" height="3.5"/><rect x="1315.3" y="1334.9" width="3.5" height="3.5"/></g>
<g fill="#1e8ad6"><rect x="1304.3" y="1332.3" width="3.5" height="3.5"/><rect x="1315.3" y="1347.3" width="3.5" height="3.5"/></g>
<rect x="1396" y="1363" width="10.6" height="1.5" fill="#333"/>

<g>
<text x="1280.07" y="260" font-size="31" font-weight="bold" fill="#1a1a1a" textLength="110.20" lengthAdjust="spacingAndGlyphs">График</text>
<text x="1816.26" y="278.9" font-size="36" fill="#ff0000" textLength="18.92" lengthAdjust="spacingAndGlyphs">3</text>
<text x="1280.03" y="640.7" font-size="31" font-weight="bold" fill="#1a1a1a" textLength="280.65" lengthAdjust="spacingAndGlyphs">Объемный график</text>
<text x="1280.05" y="882" font-size="31" font-weight="bold" fill="#1a1a1a" textLength="188.62" lengthAdjust="spacingAndGlyphs">С областями</text>
<text x="1280.03" y="1120.7" font-size="31" font-weight="bold" fill="#1a1a1a" textLength="348.40" lengthAdjust="spacingAndGlyphs">Объемная с областями</text>
<text x="1648.68" y="1120.3" font-size="35" fill="#ff0000" textLength="19.79" lengthAdjust="spacingAndGlyphs">4</text>
<text x="1341.60" y="1360.4" font-size="30" fill="#333" textLength="241.00" lengthAdjust="spacingAndGlyphs">Другие графики...</text>
</g>
</svg>
</body></html>
